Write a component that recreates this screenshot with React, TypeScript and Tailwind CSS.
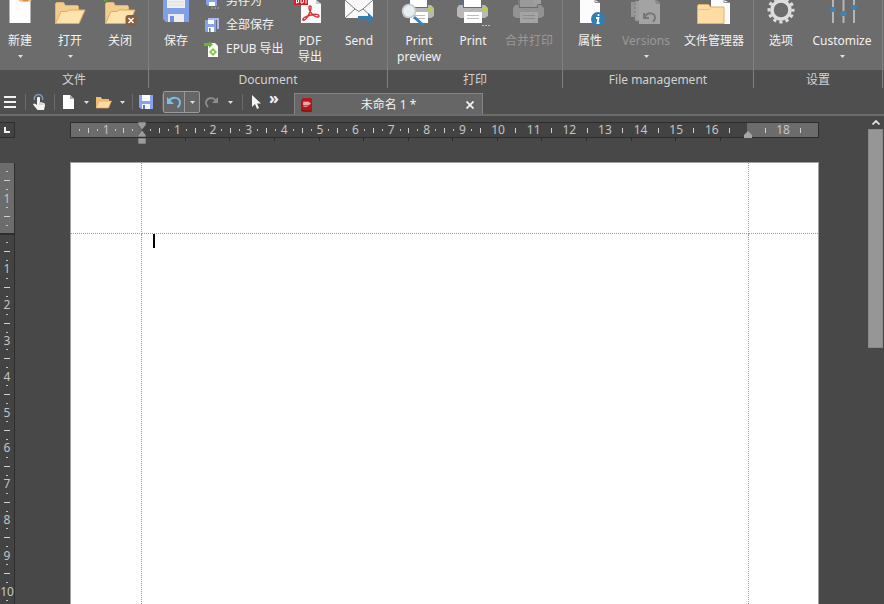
import type { ReactNode } from 'react';
import clsx from 'clsx';

/* ---------- large ribbon icons ---------- */

const NewDocIcon = () => (
  <svg className="h-8 w-10" viewBox="0 0 40 32">
    <path d="M9.5 0h21v23h-21z" fill="#fdfdfd" />
    <path d="M18 0h14a9 9 0 0 1-5 2h-4a7 7 0 0 1-5-2z" fill="#eeb98c" />
    <path d="M23 0h5v1h-5z" fill="#e08a3c" />
  </svg>
);

const FolderIcon = ({ closing = false }: { closing?: boolean }) => (
  <svg className="h-8 w-10" viewBox="0 0 40 32">
    <path d="M5.5 23.5v-20l1-1h7l2 3h12l1 1v5" fill="#f3cd8c" stroke="#e2b36a" />
    <path d="M5.5 23.5l5.5-12h6l2-1.500h16l-6 13.500z" fill="#fde3ae" stroke="#e0ac62" strokeLinejoin="round" />
    {closing && (
      <>
        <path d="M4 2L8 0H4z" fill="#4cae3a" />
        <rect x="25.500" y="15" width="11" height="11" rx="3" fill="#8a5f3f" />
        <path d="M28.500 18l5 5M33.500 18l-5 5" stroke="#fff" strokeWidth="1.500" />
      </>
    )}
  </svg>
);

const SaveIcon = () => (
  <svg className="h-8 w-10" viewBox="0 0 40 32">
    <path d="M7 0h26v22H10l-3-3z" fill="#7f9fe8" />
    <path d="M11 0h18v8H11z" fill="#f0f0f0" />
    <path d="M12 2h16M12 5h16" stroke="#dcdcdc" />
    <path d="M12 14h16v8H12z" fill="#ececec" />
    <path d="M14 16h4v6h-4z" fill="#6f8fd8" />
  </svg>
);

const PdfIcon = () => (
  <svg className="h-8 w-10" viewBox="0 0 40 32">
    <path d="M11 0h15l5 4v19H11z" fill="#fafafa" />
    <path d="M26 0v4h5z" fill="#c9c9c9" />
    <path d="M4 0h14v5H4z" fill="#cf2027" />
    <path d="M6.500 0v3.500M6.500 2.500h2V0M11 0v3h1.500l1-1V0M16 0v3.500" stroke="#fff" fill="none" />
    <path d="M13 20c-1-2 4-4 8-5s8-1 8 1-4 1-7-2-4-8-2-8 1 4-1 8-4 7-6 6z" fill="none" stroke="#d8343a" strokeWidth="1.500" />
  </svg>
);

const SendIcon = () => (
  <svg className="h-8 w-10" viewBox="0 0 40 32">
    <path d="M6 0h28v18H6z" fill="#f8f8f8" />
    <path d="M6 0l10 9L6 18M34 0L24 9l7 6M16 9l4 2.500L24 9" fill="none" stroke="#7d7d7d" />
    <path d="M19 16h10v-3l6 5-6 5v-3H19z" fill="#337fb0" />
  </svg>
);

type PrinterProps = { variant?: 'preview' | 'merge' };

const PrinterIcon = ({ variant }: PrinterProps) => {
  const off = variant === 'merge';
  return (
    <svg className="h-8 w-10" viewBox="0 0 40 32">
      <path d="M11 0h17v7H11z" fill={off ? '#9a9a9a' : '#fff'} />
      <path d="M10 0v5M28.500 0v5" stroke={off ? '#8a8a8a' : '#4f719c'} />
      <path d="M6 5h4v3h19V5h3l3 3v8l-3 2H7l-3-2V8z" fill={off ? '#929292' : '#b8b8b8'} />
      {!off && <path d="M29.500 8h4v4h-4z" fill="#b4d334" />}
      <path d="M11 12h18v11H11z" fill={off ? '#a4a4a4' : '#fff'} />
      <path d="M14 15.500h12M14 18.500h12" stroke={off ? '#8b8b8b' : '#bdbdbd'} />
      {off && <path d="M24 0h8v4h-8z" fill="#9f9f9f" />}
      {variant === 'preview' && (
        <>
          <path d="M15 17l9 8" stroke="#3a83b8" strokeWidth="3" />
          <circle cx="10" cy="11" r="6.500" fill="#e9eef0" stroke="#c3c8ca" strokeWidth="1.500" />
        </>
      )}
      {!variant && <path d="M29 25.500h2M32 25.500h2M35 25.500h2" stroke="#bdbdbd" />}
    </svg>
  );
};

const PropertiesIcon = () => (
  <svg className="h-8 w-10" viewBox="0 0 40 32">
    <path d="M10 0h15l5 3v20H10z" fill="#fcfcfc" />
    <path d="M25 0v2.500h5" fill="none" stroke="#8c8c8c" />
    <circle cx="28" cy="19" r="7" fill="#2f7fb5" />
    <path d="M28.500 14v2M26 18h2.500l-1 5h2" stroke="#fff" strokeWidth="1.800" fill="none" />
  </svg>
);

const VersionsIcon = () => (
  <svg className="h-8 w-10" viewBox="0 0 40 32">
    <path d="M5 2h18v15H5z" fill="#969696" />
    <path d="M9 1h18v20H9z" fill="#9e9e9e" stroke="#7b7b7b" strokeDasharray="2 2" />
    <path d="M13 0h17l4 3v21H13z" fill="#a3a3a3" />
    <path d="M30 0v3h4" fill="none" stroke="#767676" />
    <path d="M18 13v5h5M19 17c2-5 10-5 10 1 0 2-1 3-2 4" fill="none" stroke="#777" strokeWidth="2" />
  </svg>
);

const FileManagerIcon = () => (
  <svg className="h-8 w-10" viewBox="0 0 40 32">
    <path d="M17 0h13l6 3v21H17z" fill="#fbfbfb" />
    <path d="M30 0v2.500h6" fill="none" stroke="#8c8c8c" />
    <path d="M3.500 23.500V6l1-1.500h10l2 2.500h13.500v16.500z" fill="#fddda3" stroke="#e3b068" />
    <path d="M4 9.500h11l2-2" fill="none" stroke="#eec27f" />
  </svg>
);

const GearIcon = () => (
  <svg className="h-8 w-10" viewBox="0 0 40 32">
    <circle cx="20" cy="10" r="9" fill="none" stroke="#dedede" strokeWidth="3.500" />
    <circle cx="20" cy="10" r="12" fill="none" stroke="#dedede" strokeWidth="3" strokeDasharray="3.280 3" strokeDashoffset="1.640" />
  </svg>
);

const SlidersIcon = () => (
  <svg className="h-8 w-10" viewBox="0 0 40 32">
    <path d="M11 0v23M21.500 0v23M32 0v23" stroke="#b5b5b5" strokeWidth="2" />
    <rect x="8" y="7" width="6" height="5" rx="2" fill="#3b84b5" />
    <rect x="18.500" y="11" width="6" height="5" rx="2" fill="#3b84b5" />
    <rect x="29" y="5" width="6" height="5" rx="2" fill="#3b84b5" />
  </svg>
);

/* ---------- small icons ---------- */

const Floppy = () => (
  <svg className="size-4" viewBox="0 0 16 16">
    <path d="M1 1h14v14H3l-2-2z" fill="#86a3ea" />
    <path d="M4 1h8v6H4z" fill="#fff" />
    <path d="M4 10h8v5H4z" fill="#f1f1f1" />
    <path d="M5 11h2v4H5z" fill="#5877b8" />
  </svg>
);

const SaveAsIcon = () => (
  <svg className="size-4" viewBox="0 0 16 16">
    <path d="M2 2h11v11H4l-2-2z" fill="#86a3ea" />
    <path d="M5 9h6v4H5z" fill="#fff" />
    <path d="M7.500 15h1.500M10.500 15H12M13.500 15H15" stroke="#ccc" />
  </svg>
);

const SaveAllIcon = () => (
  <svg className="size-4" viewBox="0 0 16 16">
    <path d="M4 1h11v11h-2V3H4z" fill="#a9bdf0" />
    <path d="M1 3h11v12H2l-1-1z" fill="#86a3ea" />
    <path d="M4 3h6v4H4zM4 10h6v5H4z" fill="#fff" />
    <path d="M5 11h1.500v4H5z" fill="#5877b8" />
  </svg>
);

const EpubIcon = () => (
  <svg className="size-4" viewBox="0 0 16 16">
    <path d="M4 2h7l3 3v11H4z" fill="#fff" />
    <path d="M0 2h5V0l4 3.500L5 7V5H0z" fill="#6fb52c" />
    <path d="M9 7l4 4-4 4-4-4z" fill="#84c341" />
    <path d="M9 9.500l1.500 1.500L9 12.500 7.500 11z" fill="#fff" />
  </svg>
);

const TouchIcon = () => (
  <svg className="h-[18px] w-4" viewBox="0 0 16 18">
    <path d="M3.500 7a4.200 4.200 0 1 1 8 0" fill="none" stroke="#8296bd" strokeWidth="1.500" />
    <path d="M6 4.500q1.500-1.500 3 0V9l4 1q1.500.5 1 2.500L13 17H6.500L2 11.500q1-1.500 2.500-.5L6 12z" fill="#f4f4f4" />
    <path d="M9 9v3M11 10v2M13 10.500V12" stroke="#9a9a9a" strokeWidth=".6" />
  </svg>
);

const BlankDocIcon = () => (
  <svg className="size-4" viewBox="0 0 16 16">
    <path d="M3 1h7l4 4v10H3z" fill="#fff" />
    <path d="M10 1v4h4z" fill="#a5a5a5" />
  </svg>
);

const SmallFolderIcon = () => (
  <svg className="size-4" viewBox="0 0 16 16">
    <path d="M0 14V3h5l1 2h7v3" fill="#f0bd73" />
    <path d="M0 14l3-7h12.500l-3 7z" fill="#fddba0" stroke="#e3aa5a" strokeWidth=".7" />
  </svg>
);

const UndoIcon = () => (
  <svg className="size-4" viewBox="0 0 16 16">
    <path d="M1 3v7h7z" fill="#79bfea" />
    <path d="M3 7c2-4 11-5 11 2 0 2-1 3-2.500 4.500" fill="none" stroke="#79bfea" strokeWidth="2" />
  </svg>
);

const RedoIcon = () => (
  <svg className="size-4" viewBox="0 0 16 16">
    <path d="M14 3v6H8z" fill="#8d8d8d" />
    <path d="M12 7C9 2 2 4 2 9c0 2 1 3 2 4" fill="none" stroke="#8d8d8d" strokeWidth="1.800" />
  </svg>
);

const PointerIcon = () => (
  <svg className="h-4 w-3" viewBox="0 0 12 16">
    <path d="M2 1v12l3-3 2 5 2-1-2-4.500h4z" fill="#f6f6f6" />
  </svg>
);

const AppIcon = () => (
  <svg className="size-3.5" viewBox="0 0 14 14">
    <path d="M1 2l2-2h8l1 1v12l-2 1H2l-1-1z" fill="#b5161d" />
    <path d="M3.500 4h5l2 1.500L8.500 7h-5zM3.500 8.500h4" fill="#e9a9a9" stroke="#e8a3a3" strokeWidth=".8" />
    <path d="M1 11l3 2h8" stroke="#7b0d12" fill="none" />
  </svg>
);

const Caret = () => (
  <svg className="h-[3px] w-[5px]" viewBox="0 0 5 3">
    <path d="M0 0h5L2.500 3z" fill="#e0e0e0" />
  </svg>
);

/* ---------- ribbon ---------- */

type RibbonButtonProps = {
  icon: ReactNode;
  label: ReactNode;
  width: string;
  caret?: boolean;
  disabled?: boolean;
};

const RibbonButton = ({ icon, label, width, caret, disabled }: RibbonButtonProps) => (
  <button
    type="button"
    disabled={disabled}
    className={clsx('flex flex-col items-center leading-4 whitespace-nowrap', width, disabled ? 'text-[#999]' : 'text-[#f2f2f2]')}
  >
    <span className="mb-px block h-8">{icon}</span>
    <span>{label}</span>
    {caret && <span className="mt-1.5"><Caret /></span>}
  </button>
);

const SmallButton = ({ icon, label }: { icon: ReactNode; label: string }) => (
  <button type="button" className="flex h-6 items-center gap-1.5 whitespace-nowrap text-[#f2f2f2]">
    {icon}
    {label}
  </button>
);

const RibbonGroup = ({ title, padding, children }: { title: string; padding: string; children: ReactNode }) => (
  <section aria-label={title} className="flex shrink-0 flex-col border-r border-[#808080]">
    <div className={clsx('flex h-[70px] items-start', padding)}>{children}</div>
    <h2 className="flex h-[18px] items-center justify-center bg-[#4f4f4f] pt-0.5 text-[#d2d2d2]">{title}</h2>
  </section>
);

const Ribbon = () => (
  <header className="flex shrink-0 overflow-hidden bg-[linear-gradient(#6c6c6c_70px,#4f4f4f_70px)]">
    <RibbonGroup title="文件" padding="pr-2">
      <RibbonButton icon={<NewDocIcon />} label="新建" width="w-10" caret />
      <RibbonButton icon={<FolderIcon />} label="打开" width="w-[60px]" caret />
      <RibbonButton icon={<FolderIcon closing />} label="关闭" width="w-10" />
    </RibbonGroup>
    <RibbonGroup title="Document" padding="pr-1">
      <RibbonButton icon={<SaveIcon />} label="保存" width="w-[54px]" />
      <div className="-mt-[11px] flex w-[82px] flex-col pl-px">
        <SmallButton icon={<SaveAsIcon />} label="另存为" />
        <SmallButton icon={<SaveAllIcon />} label="全部保存" />
        <SmallButton icon={<EpubIcon />} label="EPUB 导出" />
      </div>
      <RibbonButton icon={<PdfIcon />} label={<>PDF<br />导出</>} width="w-[50px]" />
      <RibbonButton icon={<SendIcon />} label="Send" width="w-12" />
    </RibbonGroup>
    <RibbonGroup title="打印" padding="px-1">
      <RibbonButton icon={<PrinterIcon variant="preview" />} label={<>Print<br />preview</>} width="w-[54px]" />
      <RibbonButton icon={<PrinterIcon />} label="Print" width="w-[54px]" />
      <RibbonButton icon={<PrinterIcon variant="merge" />} label="合并打印" width="w-[58px]" disabled />
    </RibbonGroup>
    <RibbonGroup title="File management" padding="px-[3px]">
      <RibbonButton icon={<PropertiesIcon />} label="属性" width="w-12" />
      <RibbonButton icon={<VersionsIcon />} label="Versions" width="w-16" caret disabled />
      <RibbonButton icon={<FileManagerIcon />} label="文件管理器" width="w-[72px]" />
    </RibbonGroup>
    <RibbonGroup title="设置" padding="px-[3px]">
      <RibbonButton icon={<GearIcon />} label="选项" width="w-12" />
      <RibbonButton icon={<SlidersIcon />} label="Customize" width="w-[74px]" caret />
    </RibbonGroup>
  </header>
);

/* ---------- quick access bar and document tab ---------- */

const ToolButton = ({ label, width, children }: { label: string; width: string; children: ReactNode }) => (
  <button type="button" aria-label={label} className={clsx('flex h-[22px] shrink-0 items-center justify-center', width)}>
    {children}
  </button>
);

const Divider = () => <span className="h-4 w-px shrink-0 bg-[#6b6b6b]" />;

const QuickBar = () => (
  <div className="flex h-7 shrink-0 items-center border-b-2 border-[#6c6c6c] bg-[#4f4f4f] pt-0.5">
    <ToolButton label="Menu" width="w-5">
      <span className="flex w-3 flex-col gap-[3px]">
        <span className="h-0.5 bg-[#f2f2f2]" />
        <span className="h-0.5 bg-[#f2f2f2]" />
        <span className="h-0.5 bg-[#f2f2f2]" />
      </span>
    </ToolButton>
    <span className="w-[5px]" />
    <Divider />
    <ToolButton label="Touch mode" width="w-[26px]"><TouchIcon /></ToolButton>
    <span className="w-0.5" />
    <Divider />
    <ToolButton label="New" width="w-[26px]"><BlankDocIcon /></ToolButton>
    <ToolButton label="New options" width="w-2.5"><Caret /></ToolButton>
    <ToolButton label="Open" width="w-[26px]"><SmallFolderIcon /></ToolButton>
    <ToolButton label="Open options" width="w-2.5"><Caret /></ToolButton>
    <span className="w-[5px]" />
    <Divider />
    <ToolButton label="Save" width="w-[26px]"><Floppy /></ToolButton>
    <span className="w-[3px]" />
    <Divider />
    <span className="flex rounded-xs border border-[#9a9a9a] bg-[#666]">
      <button type="button" aria-label="Undo" className="flex h-5 w-5 items-center justify-center"><UndoIcon /></button>
      <button type="button" aria-label="Undo history" className="flex h-5 w-[15px] items-center justify-center border-l border-[#9a9a9a]"><Caret /></button>
    </span>
    <ToolButton label="Redo" width="w-6"><RedoIcon /></ToolButton>
    <ToolButton label="Redo history" width="w-3"><Caret /></ToolButton>
    <span className="w-1.5" />
    <Divider />
    <ToolButton label="Select" width="w-[26px]"><PointerIcon /></ToolButton>
    <button type="button" aria-label="More" className="mb-2 w-2.5 text-base leading-4 font-bold text-[#f2f2f2]">»</button>
    <div className="ml-[15px] flex h-[21px] w-[189px] items-center self-end border border-b-0 border-[#868686] bg-[#666] px-[5px] pt-0.5 text-[#f2f2f2]">
      <AppIcon />
      <span className="flex-1 text-center">未命名 1 *</span>
      <button type="button" aria-label="Close tab" className="flex w-3.5 justify-center">
        <svg className="size-2" viewBox="0 0 8 8">
          <path d="M.5.5l7 7M7.500.5l-7 7" stroke="#f2f2f2" strokeWidth="1.800" />
        </svg>
      </button>
    </div>
  </div>
);

/* ---------- rulers: one slot for each quarter of a centimetre ---------- */

const slots = (from: number, count: number) => Array.from({ length: count }, (_, i) => from + i);

const HMark = ({ quarter }: { quarter: number }) => {
  const cm = quarter / 4;
  if (quarter === 0 || quarter === 68) return null;
  if (quarter % 4 === 0) return <span>{Math.abs(cm)}</span>;
  if (quarter % 2 === 0) return <span className="h-[5px] w-px shrink-0 bg-[#d0d0d0]" />;
  if (cm > 9.5) return null;
  return <span className="h-0.5 w-px shrink-0 bg-[#c4c4c4]" />;
};

const VMark = ({ quarter }: { quarter: number }) => {
  if (quarter % 4 === 0) return <span>{Math.abs(quarter / 4)}</span>;
  if (quarter % 2 === 0) return <span className="h-px w-1.5 bg-[#d0d0d0]" />;
  return <span className="h-px w-0.5 bg-[#c4c4c4]" />;
};

const HorizontalRuler = () => (
  <div className="relative">
    <div className="flex h-4 items-center border border-[#2d2d2d] bg-[linear-gradient(to_right,#6c6c6c_9.500%,#434343_9.500%,#434343_90.500%,#6c6c6c_90.500%)] px-1 text-[#c4c4c4]">
      {slots(-7, 83).map((q) => (
        <span key={q} className="flex w-0 flex-1 items-center justify-center">
          <HMark quarter={q} />
        </span>
      ))}
    </div>
    {/* default tab stops */}
    <div className="flex h-[3px] pl-[9.500%]">
      {slots(0, 13).map((n) => (
        <span key={n} className="w-[6.580%] border-r border-[#2d2d2d]" />
      ))}
    </div>
    <svg className="absolute top-0 left-[9.600%] h-[22px] w-2 -translate-x-1/2" viewBox="0 0 8 22">
      <path d="M0 0h8v3L4 8 0 3zM0 15v-2l4-5 4 5v2zM0 16h8v6H0z" fill="#9c9c9c" stroke="#333" strokeWidth=".5" />
    </svg>
    <svg className="absolute top-[9px] left-[90.500%] h-[7px] w-2 -translate-x-1/2" viewBox="0 0 8 7">
      <path d="M0 7V4l4-4 4 4v3z" fill="#a6a6a6" />
    </svg>
  </div>
);

const VerticalRuler = () => (
  <div className="flex min-h-0 flex-1 flex-col overflow-hidden border-r border-[#2d2d2d] bg-[#434343] text-[#c4c4c4]">
    <div className="flex h-[72px] shrink-0 flex-col border-b-2 border-[#2d2d2d] bg-[#6c6c6c] pt-1 pb-[3px]">
      {slots(-7, 7).map((q) => (
        <span key={q} className="flex h-0 flex-1 items-center justify-center">
          <VMark quarter={q} />
        </span>
      ))}
    </div>
    <div className="mt-[3px] flex h-[367px] shrink-0 flex-col">
      {slots(1, 41).map((q) => (
        <span key={q} className="flex h-0 flex-1 items-center justify-center">
          <VMark quarter={q} />
        </span>
      ))}
    </div>
  </div>
);

/* ---------- page ---------- */

const Page = () => (
  <main className="mt-[21px] grid flex-1 grid-cols-[71px_1fr_69px] grid-rows-[71px_1fr] border border-b-0 border-[#a0a0a0] bg-white">
    <div className="border-r border-b border-dotted border-[#9a9a9a]" />
    <div className="border-r border-b border-dotted border-[#9a9a9a]" />
    <div className="border-b border-dotted border-[#9a9a9a]" />
    <div className="border-r border-dotted border-[#9a9a9a]" />
    <div className="border-r border-dotted border-[#9a9a9a] pl-[11px]">
      <span className="block h-3.5 w-0.5 bg-black" />
    </div>
    <div />
  </main>
);

const App = () => (
  <div className="flex h-screen flex-col overflow-hidden bg-[#484848] font-['Noto_Sans','Noto_Sans_CJK_SC',sans-serif] text-xs">
    <Ribbon />
    <QuickBar />
    <div className="flex min-h-0 flex-1">
      <aside className="flex w-[15px] shrink-0 flex-col gap-[25px] pt-1.5">
        <button type="button" aria-label="Tab type" className="flex h-4 shrink-0 items-center justify-center border border-l-0 border-[#2d2d2d] bg-[#434343]">
          <span className="size-1.5 border-b-2 border-l-2 border-[#f2f2f2]" />
        </button>
        <VerticalRuler />
      </aside>
      <div className="mr-[49px] ml-[55px] flex min-w-0 flex-1 flex-col pt-1.5">
        <HorizontalRuler />
        <Page />
      </div>
      <div className="flex w-4 shrink-0 flex-col">
        <button type="button" aria-label="Scroll up" className="flex h-[13px] items-center justify-center">
          <svg className="h-[5px] w-2" viewBox="0 0 8 5">
            <path d="M.5 4.500L4 1l3.500 3.500" fill="none" stroke="#e0e0e0" strokeWidth="1.800" />
          </svg>
        </button>
        <div className="mr-px h-[219px] border border-[#8a8a8a] bg-[#969696]" />
      </div>
    </div>
  </div>
);

export default App;
